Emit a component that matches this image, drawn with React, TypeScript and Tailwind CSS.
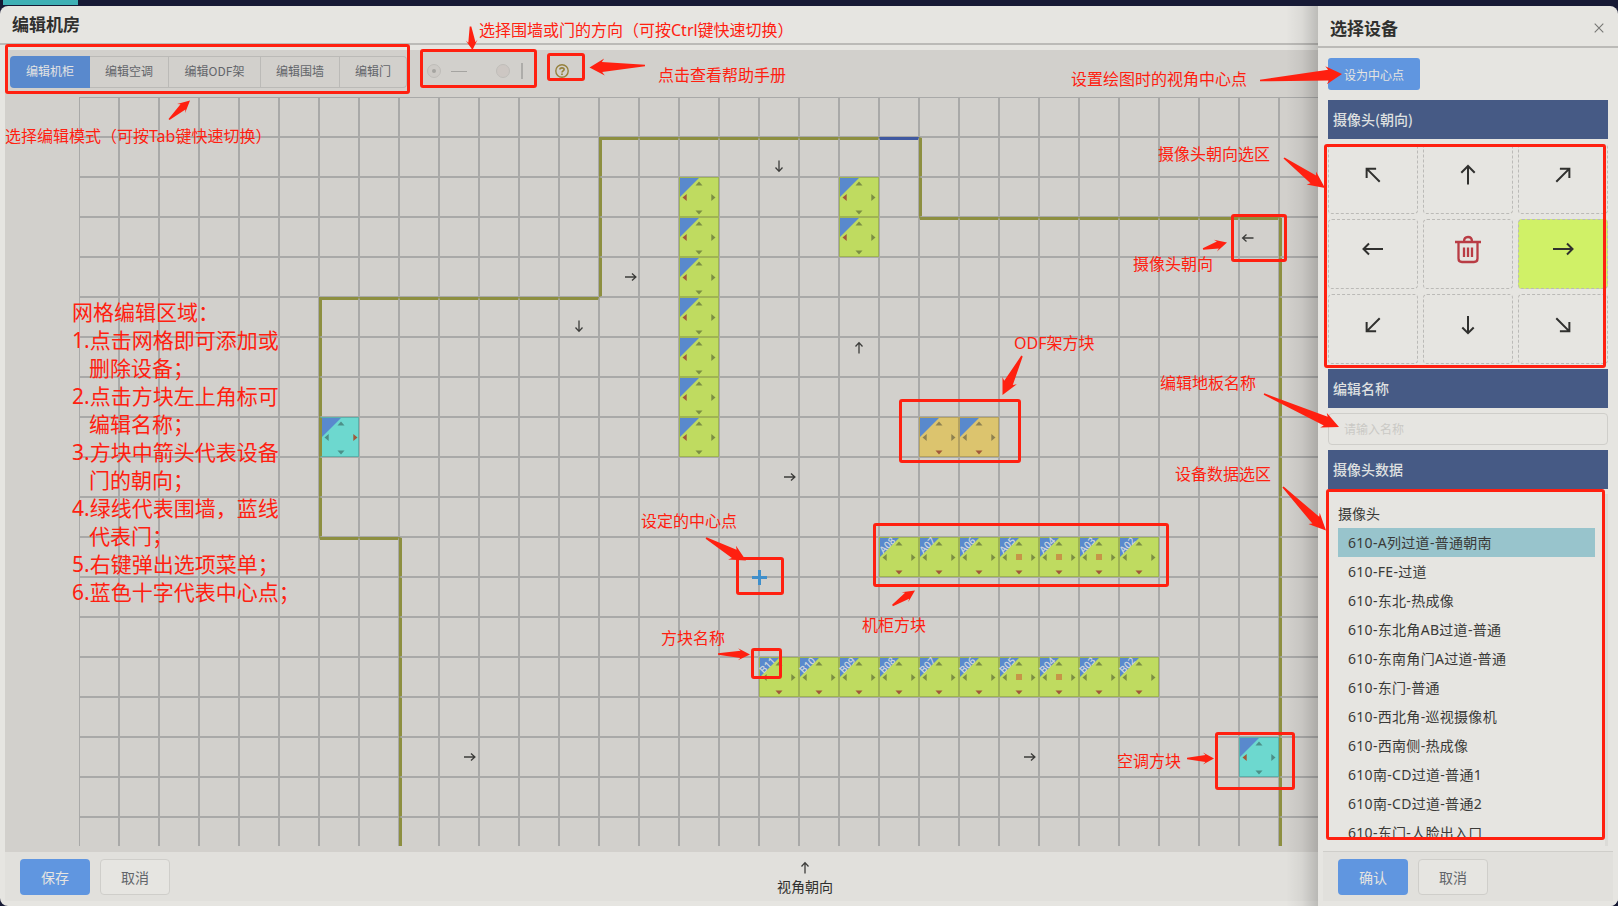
import React from "react";
import clsx from "clsx";

type Dir = "up" | "down" | "left" | "right";
type Kind = "cabinet" | "ac" | "odf";
interface Block {
  kind: Kind;
  door: Dir;
  name?: string;
  mark?: boolean;
}

const COLS = 32;
const ROWS = 19;

const blocks: Record<string, Block> = {};
const cameras: Record<string, Dir> = {
  "17,1": "down",
  "29,3": "left",
  "13,4": "right",
  "12,5": "down",
  "19,6": "up",
  "17,9": "right",
  "9,16": "right",
  "23,16": "right",
};
const topWalls: Record<string, "wall" | "door"> = {};
const leftWalls: Record<string, boolean> = {};

for (let r = 2; r <= 8; r++) blocks[`15,${r}`] = { kind: "cabinet", door: "left" };
for (let r = 2; r <= 3; r++) blocks[`19,${r}`] = { kind: "cabinet", door: "left" };
blocks["6,8"] = { kind: "ac", door: "right" };
blocks["29,16"] = { kind: "ac", door: "left" };
blocks["21,8"] = { kind: "odf", door: "down" };
blocks["22,8"] = { kind: "odf", door: "down" };
["A08", "A07", "A06", "A05", "A04", "A03", "A02"].forEach((name, i) => {
  blocks[`${20 + i},11`] = { kind: "cabinet", door: "down", name, mark: i >= 3 && i <= 5 };
});
["B11", "B10", "B09", "B08", "B07", "B06", "B05", "B04", "B03", "B02"].forEach((name, i) => {
  blocks[`${17 + i},14`] = { kind: "cabinet", door: "down", name, mark: i === 6 || i === 7 };
});

for (let c = 13; c <= 19; c++) topWalls[`${c},1`] = "wall";
topWalls["20,1"] = "door";
for (let c = 21; c <= 29; c++) topWalls[`${c},3`] = "wall";
for (let c = 6; c <= 12; c++) topWalls[`${c},5`] = "wall";
for (let c = 6; c <= 7; c++) topWalls[`${c},11`] = "wall";
for (let r = 1; r <= 4; r++) leftWalls[`13,${r}`] = true;
for (let r = 1; r <= 2; r++) leftWalls[`21,${r}`] = true;
for (let r = 5; r <= 10; r++) leftWalls[`6,${r}`] = true;
for (let r = 3; r < ROWS; r++) leftWalls[`30,${r}`] = true;
for (let r = 11; r < ROWS; r++) leftWalls[`8,${r}`] = true;

const kindStyle: Record<Kind, string> = {
  cabinet: "bg-[#bfdb60] border-[#9fb453]",
  ac: "bg-[#6dd8cf] border-[#5bb1ab]",
  odf: "bg-[#dcc46e] border-[#b5a260]",
};

const cameraShift: Record<Dir, string> = {
  up: "-translate-y-[9px]",
  down: "translate-y-[8px]",
  left: "-translate-x-[11px]",
  right: "translate-x-[10.5px]",
};

const angle: Record<string, number> = { up: 0, ne: 45, right: 90, se: 135, down: 180, sw: 225, left: 270, nw: 315 };

function SmallArrow({ dir }: { dir: Dir }) {
  return (
    <svg width="14" height="14" viewBox="0 0 14 14" fill="none" stroke="#3c3c3a" strokeWidth="1.3">
      <path d="M7 12.5V2M3.5 5.5 7 1.6l3.5 3.9" transform={`rotate(${angle[dir]} 7 7)`} />
    </svg>
  );
}

function BlockFace({ block }: { block: Block }) {
  const tone = (d: Dir) =>
    d === block.door ? "#a1593b" : block.kind === "ac" ? "#4c8f88" : block.kind === "odf" ? "#8e8150" : "#7c8e43";
  return (
    <svg width="38" height="38" viewBox="0 0 38 38" className="block overflow-visible">
      <path d="M0 0H19L0 19Z" fill="#5989cd" />
      <path d="M15.5 7.5h7L19 3.5z" fill={tone("up")} />
      <path d="M15.5 32.5h7L19 36.5z" fill={tone("down")} />
      <path d="M6.7 16v7L2.5 19.5z" fill={tone("left")} />
      <path d="M31.3 16v7l4.2-3.5z" fill={tone("right")} />
      {block.mark && <rect x="16" y="16" width="6" height="6" fill="#c69548" />}
      {block.name && (
        <text
          x="7.2"
          y="10.8"
          fontSize="10"
          fontWeight="600"
          textAnchor="middle"
          fill="#cdd5de"
          fontFamily="Open Sans, sans-serif"
          transform="rotate(-45 7.2 7.2)"
        >
          {block.name}
        </text>
      )}
    </svg>
  );
}

function Cell({ c, r }: { c: number; r: number }) {
  const key = `${c},${r}`;
  const block = blocks[key];
  if (block) {
    return (
      <div
        className={clsx(
          "size-10 border",
          kindStyle[block.kind],
          leftWalls[key] && "overflow-hidden border-l-[3px] border-l-[#8d8f40]",
        )}
      >
        <BlockFace block={block} />
      </div>
    );
  }
  const cam = cameras[key];
  const top = topWalls[key];
  return (
    <div
      className={clsx(
        "flex size-10 items-center justify-center border border-[#a9a9a8]",
        top && "border-t-[3px]",
        top === "wall" && "border-t-[#8d8f40]",
        top === "door" && "border-t-[#4059a0]",
        leftWalls[key] && "border-l-[3px] border-l-[#8d8f40]",
      )}
    >
      {cam && (
        <span className={cameraShift[cam]}>
          <SmallArrow dir={cam} />
        </span>
      )}
    </div>
  );
}

const modes = [
  { label: "编辑机柜", w: "w-20" },
  { label: "编辑空调", w: "w-[79px]" },
  { label: "编辑ODF架", w: "w-[92px]" },
  { label: "编辑围墙", w: "w-[79px]" },
  { label: "编辑门", w: "w-[67px]" },
];

function Toolbar() {
  return (
    <div className="flex h-[47px] items-center pl-[5px] pb-[5px]">
      <div className="mt-px flex h-8 text-[12px] leading-none">
        {modes.map((m, i) => (
          <div
            key={m.label}
            className={clsx(
              "flex items-center justify-center pb-px",
              m.w,
              i === 0
                ? "rounded-l bg-[#5989cd] text-[#e3e3e2]"
                : "border-y border-r border-[#bbbab7] text-[#62656a]",
              i === 4 && "rounded-r",
            )}
          >
            {m.label}
          </div>
        ))}
      </div>
      <div className="ml-[20px] flex items-center">
        <span className="flex size-3.5 items-center justify-center rounded-full border border-[#bfbdb9] bg-[#cdcac6]">
          <span className="size-1 rounded-full bg-[#a5a4a1]" />
        </span>
        <span className="ml-2.5 h-px w-4 bg-[#a5a4a1]" />
        <span className="ml-[29px] size-3.5 rounded-full border border-[#bfbdb9] bg-[#cdc7c3]" />
        <span className="ml-[11px] h-4 w-0.5 bg-[#adaca9]" />
      </div>
      <svg className="mb-px ml-8" width="14" height="14" viewBox="0 0 14 14" fill="none" stroke="#96813d" strokeWidth="1.4">
        <circle cx="7" cy="7" r="6.2" />
        <path d="M4.9 5.6C4.9 3.2 9.1 3.2 9.1 5.5 9.1 6.8 7 6.9 7 8.5M7 9.500V11" strokeWidth="1.7" />
      </svg>
    </div>
  );
}

const pad = ["nw", "up", "ne", "left", "trash", "right", "sw", "down", "se"];

function PadIcon({ name }: { name: string }) {
  if (name === "trash") {
    return (
      <svg width="28" height="30" viewBox="0 0 28 30" fill="none" stroke="#b93c44" strokeWidth="2.3">
        <path d="M1 8h26M4.5 8.5v16q0 3.5 3.5 3.5h12q3.5 0 3.5-3.5v-16M10 7.5q0-4.5 4-4.500t4 4.500" />
        <path d="M10 13.5v9.5M14 13.5v9.5M18 13.5v9.5" />
      </svg>
    );
  }
  const shape =
    name.length === 2
      ? "M14 23.5V5M7.3 11.7 14 5l6.7 6.7"
      : name === "up" || name === "down"
        ? "M14 23V6M8.3 11.5 14 5.8l5.7 5.7"
        : "M14 24V4.500M8.5 10 14 4.5l5.5 5.5";
  return (
    <svg width="28" height="28" viewBox="0 0 28 28" fill="none" stroke="#30302e" strokeWidth="2">
      <path d={shape} transform={`rotate(${angle[name]} 14 14)`} />
    </svg>
  );
}

const devices = [
  "610-A列过道-普通朝南",
  "610-FE-过道",
  "610-东北-热成像",
  "610-东北角AB过道-普通",
  "610-东南角门A过道-普通",
  "610-东门-普通",
  "610-西北角-巡视摄像机",
  "610-西南侧-热成像",
  "610南-CD过道-普通1",
  "610南-CD过道-普通2",
  "610-东门-人脸出入口",
];

function SectionTitle({ children }: { children: React.ReactNode }) {
  return (
    <div className="flex h-[39px] shrink-0 items-center bg-[#465a85] pl-[5px] text-[14px] font-medium text-[#dfe0e0]">
      {children}
    </div>
  );
}

function Drawer() {
  return (
    <aside className="absolute top-[9px] right-0 z-10 flex h-[897px] w-[300px] flex-col overflow-hidden rounded-lg bg-[#e6e5e1]">
      <header className="flex h-[39px] shrink-0 items-center justify-between border-b-2 border-[#bbbab7] pr-3.5 pl-3">
        <h2 className="text-[17px] font-bold text-[#30302e]">选择设备</h2>
        <svg width="10" height="10" viewBox="0 0 10 10" stroke="#777774" strokeWidth="1.1">
          <path d="M.7.7l8.6 8.6M9.3.7.7 9.3" />
        </svg>
      </header>
      <div className="flex h-[803px] shrink-0 flex-col overflow-hidden px-2.5 pt-2.5">
        <button className="flex h-8 w-[92px] shrink-0 items-center justify-center rounded-[3px] bg-[#6096e0] pt-px text-[12px] text-[#e6e5e1]">
          设为中心点
        </button>
        <div className="mt-2.5 shrink-0">
          <SectionTitle>摄像头(朝向)</SectionTitle>
        </div>
        <div className="mt-[5px] grid shrink-0 grid-cols-3 gap-[5px]">
          {pad.map((p, i) => (
            <div
              key={p}
              className={clsx(
                "flex h-[70px] items-center justify-center rounded border border-dashed border-[#bbbab7]",
                i >= 3 && i <= 5 ? "pb-[11px]" : "pb-[9px]",
                p === "right" && "bg-[#d0f167]",
              )}
            >
              <PadIcon name={p} />
            </div>
          ))}
        </div>
        <div className="mt-[5px] shrink-0">
          <SectionTitle>编辑名称</SectionTitle>
        </div>
        <div className="mt-[5px] flex h-8 shrink-0 items-center rounded border border-[#cfceca] pl-[15px] text-[12px] text-[#cac9c5]">
          请输入名称
        </div>
        <div className="mt-[5px] shrink-0">
          <SectionTitle>摄像头数据</SectionTitle>
        </div>
        <div className="mt-[5px] h-[352px] shrink-0 overflow-hidden border-r-[3px] border-[#dcdbd7] pt-[5px] pr-2.5 pl-2.5 font-['Noto_Sans','Noto_Sans_CJK_SC',sans-serif] text-[14px] text-[#3a3a38]">
          <div className="h-[341px] overflow-hidden">
            <div className="h-[29px] leading-[29px]">摄像头</div>
            {devices.map((d, i) => (
              <div
                key={d}
                className={clsx(
                  "h-[29px] pl-2.5 leading-[29px] tracking-[0.3px] whitespace-nowrap",
                  i === 0 && "bg-[#98c4cc]",
                )}
              >
                {d}
              </div>
            ))}
          </div>
        </div>
      </div>
      <footer className="mx-[5px] flex h-[50px] shrink-0 gap-2.5 border-t border-[#cfceca] bg-[#e1e0dc] pt-[7px] pl-[15px]">
        <button className="flex h-9 w-[70px] items-center justify-center rounded bg-[#6096e0] text-[14px] text-[#e6e5e1]">确认</button>
        <button className="flex h-9 w-[70px] items-center justify-center rounded border border-[#cfceca] bg-[#e6e5e1] text-[14px] text-[#62656a]">
          取消
        </button>
      </footer>
    </aside>
  );
}

const notes: [string, number, number][] = [
  ["选择编辑模式（可按Tab键快速切换）", 5, 137],
  ["选择围墙或门的方向（可按Ctrl键快速切换）", 479, 31],
  ["点击查看帮助手册", 658, 76],
  ["设置绘图时的视角中心点", 1071, 80],
  ["摄像头朝向选区", 1158, 155],
  ["摄像头朝向", 1133, 265],
  ["ODF架方块", 1014, 344],
  ["编辑地板名称", 1160, 384],
  ["设备数据选区", 1175, 475],
  ["设定的中心点", 641, 522],
  ["机柜方块", 862, 626],
  ["方块名称", 661, 639],
  ["空调方块", 1117, 762],
];

const frames = [
  [5, 44, 405, 50],
  [420, 49, 117, 39],
  [547, 53, 38, 28],
  [1324, 144, 282, 224],
  [1231, 214, 56, 48],
  [1326, 489, 279, 351],
  [899, 399, 122, 64],
  [873, 523, 296, 64],
  [736, 557, 48, 38],
  [751, 648, 31, 31],
  [1215, 732, 80, 58],
];

// x1, y1 (tail), x2, y2 (tip), head length, head width
const pointers = [
  [169, 119.5, 190, 100.5, 12, 12],
  [470.5, 26.5, 472.5, 50, 10, 12],
  [645, 65.5, 589.5, 67.5, 15, 17],
  [1260, 80.5, 1342, 74, 16, 18],
  [1284, 158, 1325, 188, 17, 16],
  [1203, 249, 1227, 242.5, 12, 12],
  [1022, 356, 1002.5, 395, 16, 16],
  [1264, 394, 1339, 427, 17, 16],
  [1283, 487, 1326, 530.5, 17, 16],
  [1187, 758.5, 1214, 758.5, 11, 12],
  [892.5, 605.5, 915, 590.5, 12, 12],
  [718, 654, 750, 654.5, 12, 12],
  [706, 538, 746, 560.5, 16, 16],
];

function pointerPath([x1, y1, x2, y2, len, width]: number[]) {
  const d = Math.hypot(x2 - x1, y2 - y1);
  const ux = (x2 - x1) / d;
  const uy = (y2 - y1) / d;
  const at = (along: number, side: number) =>
    `${(x2 - ux * along - uy * side).toFixed(1)},${(y2 - uy * along + ux * side).toFixed(1)}`;
  const w = width / 2;
  return [at(0, 0), at(len, w), at(len - 2.5, w * 0.6), at(d, 0.8), at(d, -0.8), at(len - 2.5, -w * 0.6), at(len, -w)].join(" ");
}

const guide: [string, boolean][] = [
  ["网格编辑区域：", false],
  ["1.点击网格即可添加或", false],
  ["删除设备；", true],
  ["2.点击方块左上角标可", false],
  ["编辑名称；", true],
  ["3.方块中箭头代表设备", false],
  ["门的朝向；", true],
  ["4.绿线代表围墙，蓝线", false],
  ["代表门；", true],
  ["5.右键弹出选项菜单；", false],
  ["6.蓝色十字代表中心点；", false],
];

function Annotations() {
  return (
    <div className="pointer-events-none absolute inset-0 z-20 font-['Noto_Sans','Noto_Sans_CJK_SC',sans-serif] font-normal text-[#ff2010]">
      {frames.map(([left, top, width, height]) => (
        <div key={`${left}-${top}`} className="absolute rounded-[3px] border-3 border-[#ff2010]" style={{ left, top, width, height }} />
      ))}
      <svg className="absolute inset-0" width="1618" height="906" fill="#ff2010">
        {pointers.map((p) => (
          <polygon key={p[0]} points={pointerPath(p)} />
        ))}
      </svg>
      {notes.map(([text, left, cy]) => (
        <div key={text} className="absolute h-6 text-[16px] leading-6 whitespace-nowrap" style={{ left, top: cy - 13 }}>
          {text}
        </div>
      ))}
      <div className="absolute top-[298px] left-[72px] text-[21px] leading-[28px] whitespace-nowrap">
        {guide.map(([line, indent]) => (
          <div key={line} className={clsx("h-7", indent && "pl-[17px]")}>
            {line}
          </div>
        ))}
      </div>
    </div>
  );
}

export default function App() {
  const cells = [];
  for (let r = 0; r < ROWS; r++) for (let c = 0; c < COLS; c++) cells.push(<Cell key={`${c},${r}`} c={c} r={r} />);
  return (
    <div className="relative h-[906px] w-[1618px] overflow-hidden bg-[#171a35] pt-[6px] font-['Noto_Sans_CJK_SC','Noto_Sans',sans-serif]">
      <div className="absolute top-0 left-[3px] h-[5px] w-[75px] bg-[#3fb0b5]" />
      <main className="flex h-[900px] flex-col overflow-hidden rounded-lg bg-[#e6e5e1]">
        <header className="flex h-[39px] shrink-0 items-center border-b-2 border-[#bbbab7] pb-px pl-3">
          <h1 className="text-[17px] font-bold text-[#30302e]">编辑机房</h1>
        </header>
        <section className="mt-[5px] ml-[5px] h-[802px] shrink-0 overflow-hidden bg-[#d2d0cc]">
          <Toolbar />
          <div className="relative ml-[74px] h-[749px] overflow-hidden">
            <div className="grid w-[1280px] grid-cols-[repeat(32,40px)]">{cells}</div>
            <svg className="absolute top-[473px] left-[673px]" width="15" height="15" stroke="#3f8fcb" strokeWidth="3">
              <path d="M7.5 0v15M0 7.5h15" />
            </svg>
          </div>
        </section>
        <footer className="relative ml-[5px] flex h-[49px] shrink-0 gap-2.5 bg-[#e1e0dc] pt-[7px] pl-[15px] text-[14px]">
          <button className="flex h-9 w-[70px] items-center justify-center rounded bg-[#6096e0] text-[#e6e5e1]">保存</button>
          <button className="flex h-9 w-[70px] items-center justify-center rounded border border-[#cfceca] bg-[#e6e5e1] text-[#62656a]">取消</button>
          <div className="ml-[597px] flex flex-col items-center pt-[2px] text-[#30302e]">
            <SmallArrow dir="up" />
            <span className="text-[14px] leading-[22px]">视角朝向</span>
          </div>
        </footer>
      </main>
      <div className="absolute top-[6px] right-[300px] h-[900px] w-[32px] bg-linear-to-l from-black/18 via-black/5 to-transparent" />
      <Drawer />
      <Annotations />
    </div>
  );
}
